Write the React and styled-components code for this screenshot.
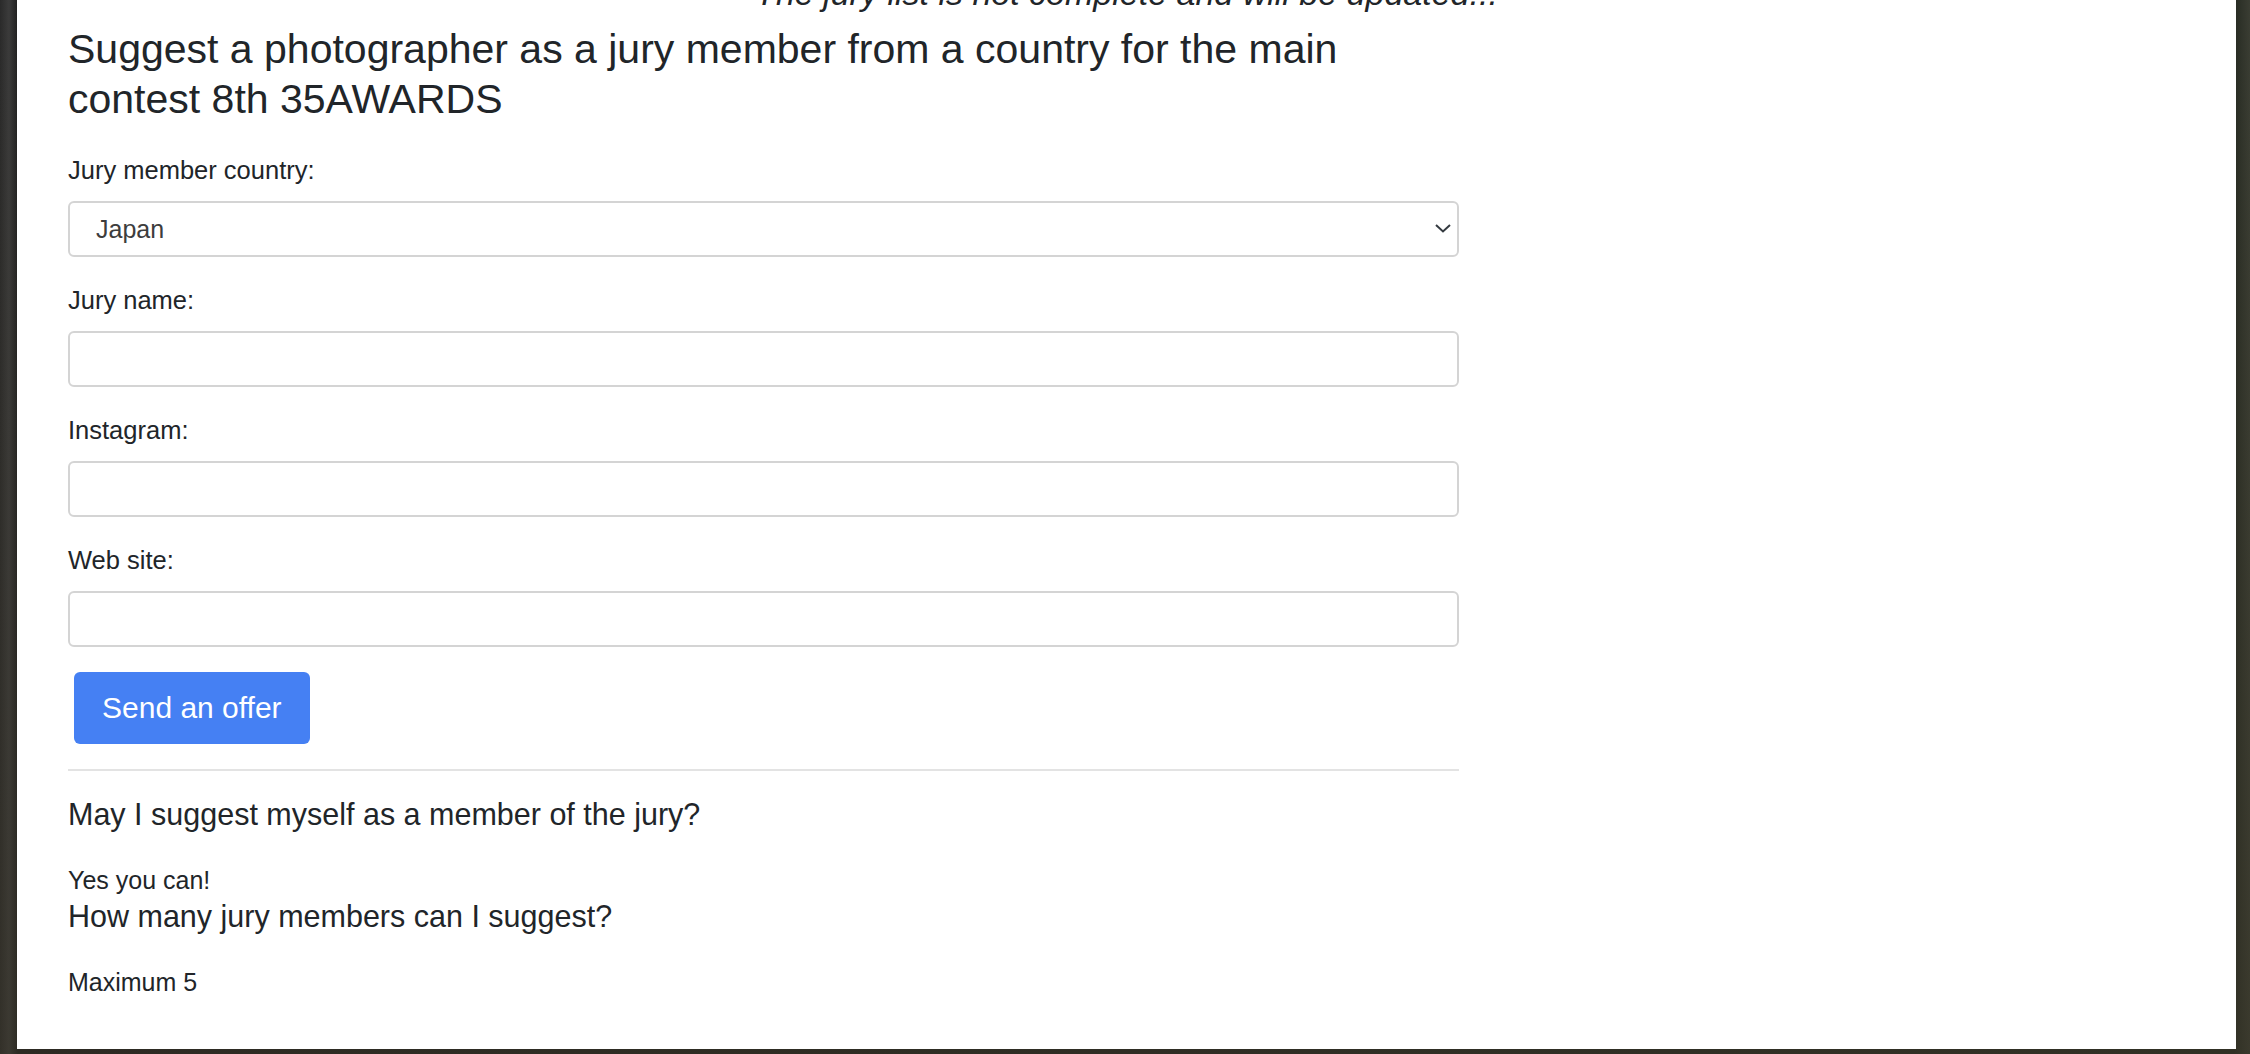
import styled, { createGlobalStyle } from "styled-components";

const GlobalStyle = createGlobalStyle`
    html, body {
        margin: 0;
        padding: 0;
    }
    body {
        font-family: "Liberation Sans", Arial, sans-serif;
        color: #212529;
        background: #1c1c1c;
    }
    * {
        box-sizing: border-box;
    }
`;

const Backdrop = styled.div`
    width: 2250px;
    height: 1054px;
    overflow: hidden;
    background:
        linear-gradient(180deg, rgba(0,0,0,0) 0%, rgba(60,55,40,0.5) 100%),
        linear-gradient(90deg, #2a2a2a 0%, #3b3b3b 0.4%, #1e1e1e 0.8%, #262a22 99.3%, #3a3d33 100%);
`;

const Panel = styled.div`
    margin: 0 14px 0 17px;
    height: 1049px;
    background: #ffffff;
    padding: 0 51px;
    overflow: hidden;
`;

const Notice = styled.p`
    margin: -27px 0 0;
    height: 40px;
    font-size: 34px;
    line-height: 40px;
    font-style: italic;
    text-align: center;
    color: #212529;
`;

const Column = styled.div`
    width: 1391px;
`;

const Title = styled.h1`
    margin: 11px 0 0;
    max-width: 1340px;
    font-size: 41px;
    line-height: 50px;
    font-weight: 400;
    color: #212529;
`;

const Form = styled.form`
    display: flex;
    flex-direction: column;
    gap: 28px;
    margin-top: 31px;
`;

const Group = styled.div`
    display: flex;
    flex-direction: column;
    gap: 16px;
`;

const Label = styled.label`
    font-size: 25.5px;
    line-height: 30px;
    color: #212529;
`;

const Field = styled.input`
    width: 100%;
    height: 56px;
    border: 2px solid #d4d4d4;
    border-radius: 6px;
    padding: 0 26px;
    font-family: "Liberation Sans", Arial, sans-serif;
    font-size: 25px;
    color: #3d3d3d;
    background: #fff;
    outline: none;
`;

const SelectWrap = styled.div`
    position: relative;
`;

const Select = styled.select`
    appearance: none;
    -webkit-appearance: none;
    width: 100%;
    height: 56px;
    border: 2px solid #d4d4d4;
    border-radius: 6px;
    padding: 0 26px;
    font-family: "Liberation Sans", Arial, sans-serif;
    font-size: 25px;
    color: #3d3d3d;
    background: #fff;
    outline: none;
`;

const Chevron = styled.svg`
    position: absolute;
    right: 7px;
    top: 21px;
    pointer-events: none;
`;

const Actions = styled.div`
    padding: 25px 6px 25px;
`;

const Button = styled.button`
    height: 72px;
    padding: 0 28px;
    border: none;
    border-radius: 6px;
    background: #4580f3;
    color: #ffffff;
    font-family: "Liberation Sans", Arial, sans-serif;
    font-size: 30px;
    cursor: pointer;
`;

const Divider = styled.hr`
    margin: 0;
    border: none;
    height: 2px;
    background: #e3e3e3;
`;

const Faq = styled.div`
    padding-top: 25px;
`;

const Question = styled.h5`
    margin: 0 0 33px;
    font-size: 30.5px;
    line-height: 36px;
    font-weight: 400;
    color: #212529;
`;

const Answer = styled.p`
    margin: 0 0 3px;
    font-size: 25px;
    line-height: 30px;
    color: #212529;
`;

const fields = [
    { id: "name", label: "Jury name:" },
    { id: "instagram", label: "Instagram:" },
    { id: "site", label: "Web site:" },
];

const faq = [
    { q: "May I suggest myself as a member of the jury?", a: "Yes you can!" },
    { q: "How many jury members can I suggest?", a: "Maximum 5" },
];

const App = () => {
    return (
        <Backdrop>
            <GlobalStyle />
            <Panel>
                <Notice>The jury list is not complete and will be updated...</Notice>
                <Column>
                    <Title>Suggest a photographer as a jury member from a country for the main contest 8th 35AWARDS</Title>
                    <Form onSubmit={(e) => e.preventDefault()}>
                        <Group>
                            <Label htmlFor="country">Jury member country:</Label>
                            <SelectWrap>
                                <Select id="country" defaultValue="Japan">
                                    <option>Japan</option>
                                    <option>France</option>
                                    <option>Germany</option>
                                </Select>
                                <Chevron width="18" height="12" viewBox="0 0 18 12">
                                    <path d="M2 3 L9 9.5 L16 3" fill="none" stroke="#343a40" strokeWidth="2" />
                                </Chevron>
                            </SelectWrap>
                        </Group>
                        {fields.map((f) => (
                            <Group key={f.id}>
                                <Label htmlFor={f.id}>{f.label}</Label>
                                <Field id={f.id} type="text" />
                            </Group>
                        ))}
                    </Form>
                    <Actions>
                        <Button type="button">Send an offer</Button>
                    </Actions>
                    <Divider />
                    <Faq>
                        {faq.map((item) => (
                            <div key={item.q}>
                                <Question>{item.q}</Question>
                                <Answer>{item.a}</Answer>
                            </div>
                        ))}
                    </Faq>
                </Column>
            </Panel>
        </Backdrop>
    );
};

export default App;
